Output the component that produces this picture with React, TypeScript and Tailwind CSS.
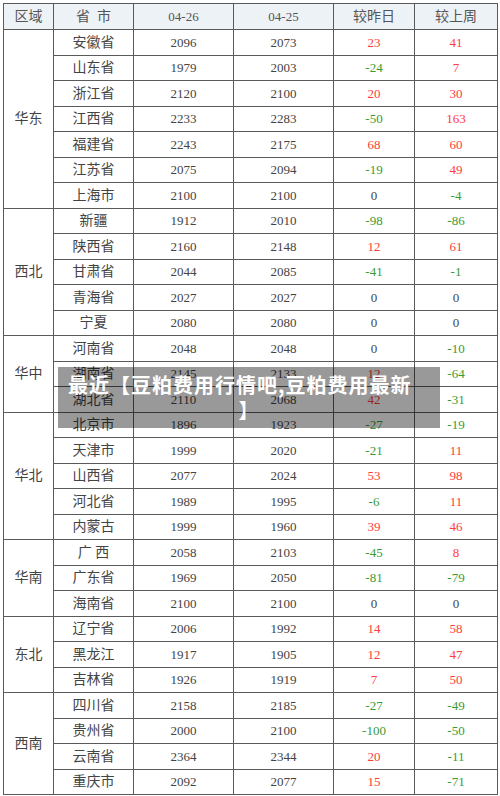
import React from "react";

type Row = [string, number, number, number, number];
const groups: { region: string; rows: Row[] }[] = [
  {
    region: "华东",
    rows: [
      ["安徽省", 2096, 2073, 23, 41],
      ["山东省", 1979, 2003, -24, 7],
      ["浙江省", 2120, 2100, 20, 30],
      ["江西省", 2233, 2283, -50, 163],
      ["福建省", 2243, 2175, 68, 60],
      ["江苏省", 2075, 2094, -19, 49],
      ["上海市", 2100, 2100, 0, -4],
    ],
  },
  {
    region: "西北",
    rows: [
      ["新疆", 1912, 2010, -98, -86],
      ["陕西省", 2160, 2148, 12, 61],
      ["甘肃省", 2044, 2085, -41, -1],
      ["青海省", 2027, 2027, 0, 0],
      ["宁夏", 2080, 2080, 0, 0],
    ],
  },
  {
    region: "华中",
    rows: [
      ["河南省", 2048, 2048, 0, -10],
      ["湖南省", 2145, 2133, 12, -64],
      ["湖北省", 2110, 2068, 42, -31],
    ],
  },
  {
    region: "华北",
    rows: [
      ["北京市", 1896, 1923, -27, -19],
      ["天津市", 1999, 2020, -21, 11],
      ["山西省", 2077, 2024, 53, 98],
      ["河北省", 1989, 1995, -6, 11],
      ["内蒙古", 1999, 1960, 39, 46],
    ],
  },
  {
    region: "华南",
    rows: [
      ["广 西", 2058, 2103, -45, 8],
      ["广东省", 1969, 2050, -81, -79],
      ["海南省", 2100, 2100, 0, 0],
    ],
  },
  {
    region: "东北",
    rows: [
      ["辽宁省", 2006, 1992, 14, 58],
      ["黑龙江", 1917, 1905, 12, 47],
      ["吉林省", 1926, 1919, 7, 50],
    ],
  },
  {
    region: "西南",
    rows: [
      ["四川省", 2158, 2185, -27, -49],
      ["贵州省", 2000, 2100, -100, -50],
      ["云南省", 2364, 2344, 20, -11],
      ["重庆市", 2092, 2077, 15, -71],
    ],
  },
];

function Diff({ v }: { v: number }) {
  const cls = v > 0 ? "text-[#ff3b3b]" : v < 0 ? "text-[#3a9a34]" : "text-[#444]";
  return <span className={cls}>{v}</span>;
}

const td = "border border-[#5a5a5a] text-center align-middle p-0";

export default function App() {
  return (
    <div
      className="relative w-[500px] h-[796px] bg-white p-[3px] text-[13px] text-[#444]"
      style={{ fontFamily: '"Liberation Serif", "Noto Sans CJK SC", serif' }}
    >
      <table className="w-[494px] table-fixed border-collapse">
        <colgroup>
          <col className="w-[50px]" />
          <col className="w-[80px]" />
          <col className="w-[100px]" />
          <col className="w-[100px]" />
          <col className="w-[81px]" />
          <col className="w-[83px]" />
        </colgroup>
        <thead>
          <tr className="h-[26px] bg-[#edf2f7] text-[#555]">
            <th className={`${td} font-normal text-[14px]`}>区域</th>
            <th className={`${td} font-normal text-[14px]`}>省&nbsp;&nbsp;市</th>
            <th className={`${td} font-normal`}>04-26</th>
            <th className={`${td} font-normal`}>04-25</th>
            <th className={`${td} font-normal text-[14px]`}>较昨日</th>
            <th className={`${td} font-normal text-[14px]`}>较上周</th>
          </tr>
        </thead>
        <tbody>
          {groups.map((g) =>
            g.rows.map((r, i) => (
              <tr key={r[0]} className="h-[25.5px]">
                {i === 0 && (
                  <td rowSpan={g.rows.length} className={`${td} text-[14px]`}>
                    {g.region}
                  </td>
                )}
                <td className={`${td} text-[14px]`}>{r[0]}</td>
                <td className={td}>{r[1]}</td>
                <td className={td}>{r[2]}</td>
                <td className={td}>
                  <Diff v={r[3]} />
                </td>
                <td className={td}>
                  <Diff v={r[4]} />
                </td>
              </tr>
            ))
          )}
        </tbody>
      </table>
      <div
        className="absolute left-[58px] top-[367px] w-[382px] h-[61px] bg-[rgba(0,0,0,0.4)] px-[10px] py-[5px] text-white font-bold text-[20px] leading-[25px] tracking-[1px]"
        style={{ fontFamily: '"Noto Sans CJK SC", sans-serif' }}
      >
        <div className="whitespace-nowrap text-left">最近【豆粕费用行情吧,豆粕费用最新</div>
        <div className="text-center">】</div>
      </div>
    </div>
  );
}
